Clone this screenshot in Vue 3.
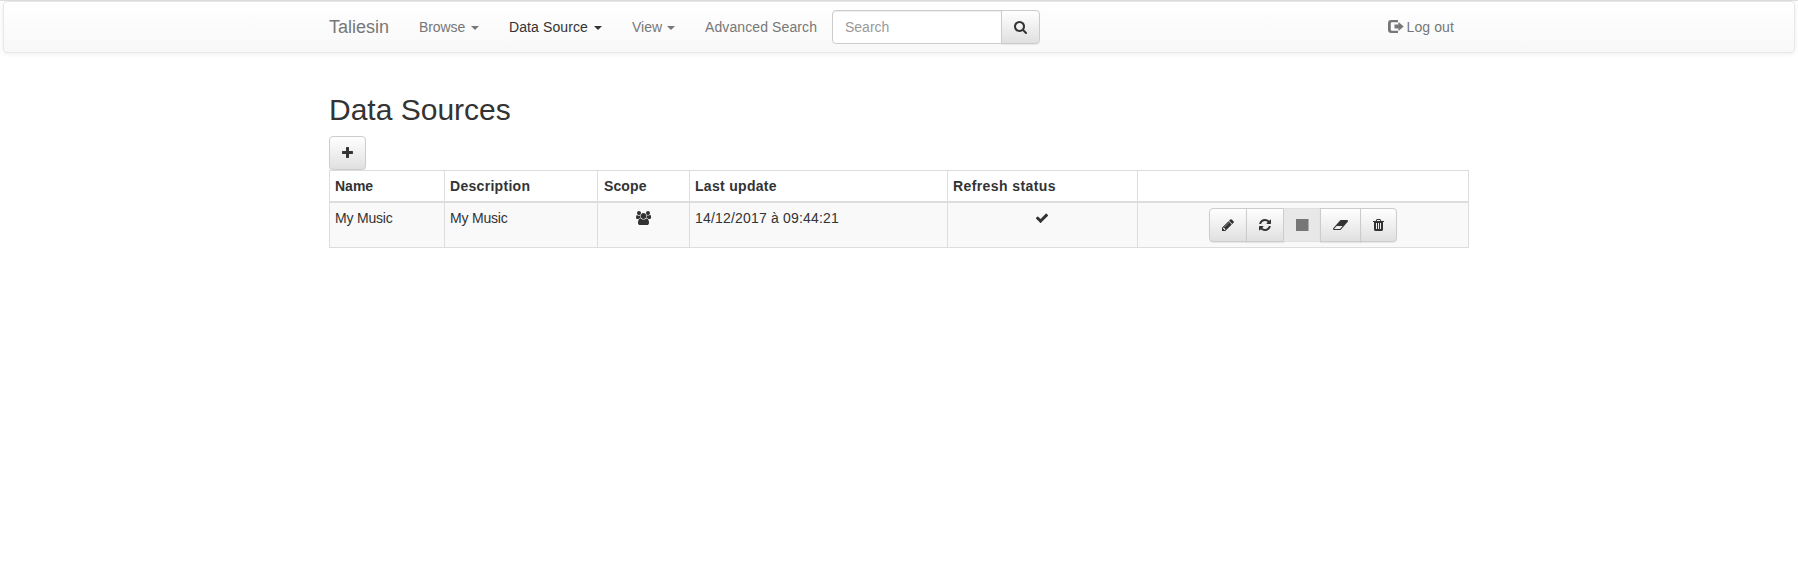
<script setup>
const icons = {
  search: { w: 1664, x: 64, d: 'M1216 832q0-185-131.5-316.5t-316.5-131.5-316.5 131.5-131.5 316.5 131.5 316.5 316.5 131.5 316.5-131.5 131.5-316.5zm512 832q0 52-38 90t-90 38q-54 0-90-38l-343-342q-179 124-399 124-143 0-273.5-55.5t-225-150-150-225-55.5-273.5 55.5-273.5 150-225 225-150 273.5-55.5 273.5 55.5 225 150 150 225 55.5 273.5q0 220-124 399l343 343q37 37 37 90z' },
  plus: { w: 1408, x: 192, d: 'M1600 736v192q0 40-28 68t-68 28h-416v416q0 40-28 68t-68 28h-192q-40 0-68-28t-28-68v-416h-416q-40 0-68-28t-28-68v-192q0-40 28-68t68-28h416v-416q0-40 28-68t68-28h192q40 0 68 28t28 68v416h416q40 0 68 28t28 68z' },
  check: { w: 1792, x: 0, d: 'M1671 566q0 40-28 68l-724 724-136 136q-28 28-68 28t-68-28l-136-136-362-362q-28-28-28-68t28-68l136-136q28-28 68-28t68 28l294 295 656-657q28-28 68-28t68 28l136 136q28 28 28 68z' },
  pencil: { w: 1536, x: 128, d: 'M491 1536l91-91-235-235-91 91v107h128v128h107zm523-928q0-22-22-22-10 0-17 7l-542 542q-7 7-7 17 0 22 22 22 10 0 17-7l542-542q7-7 7-17zm-54-192l416 416-832 832h-416v-416zm683 96q0 53-37 90l-166 166-416-416 166-165q36-38 90-38 53 0 91 38l235 234q37 39 37 91z' },
  refresh: { w: 1536, x: 128, d: 'M1639 1056q0 5-1 7-64 268-268 434.5t-478 166.5q-146 0-282.5-55t-243.5-157l-129 129q-19 19-45 19t-45-19-19-45v-448q0-26 19-45t45-19h448q26 0 45 19t19 45-19 45l-137 137q71 66 161 102t187 36q134 0 250-65t186-179q11-17 53-117 8-23 30-23h192q13 0 22.5 9.5t9.5 22.5zm25-800v448q0 26-19 45t-45 19h-448q-26 0-45-19t-19-45 19-45l138-138q-148-137-349-137-134 0-250 65t-186 179q-11 17-53 117-8 23-30 23h-199q-13 0-22.5-9.5t-9.5-22.5v-7q65-268 270-434.5t480-166.5q146 0 284 55.5t245 156.5l130-129q19-19 45-19t45 19 19 45z' },
  stop: { w: 1664, x: 64, d: 'M64 128h1600v1536h-1600z' },
  eraser: { w: 1920, x: 64, d: 'M960 1408l336-384h-768l-336 384h768zm1013-1077q15 34 9.5 71.5t-30.5 65.5l-896 1024q-38 44-96 44h-768q-38 0-69.5-20.5t-47.5-54.5q-15-34-9.5-71.5t30.5-65.5l896-1024q38-44 96-44h768q38 0 69.5 20.5t47.5 54.5z' },
  trash: { w: 1408, x: 192, d: 'M704 1376v-704q0-14-9-23t-23-9h-64q-14 0-23 9t-9 23v704q0 14 9 23t23 9h64q14 0 23-9t9-23zm256 0v-704q0-14-9-23t-23-9h-64q-14 0-23 9t-9 23v704q0 14 9 23t23 9h64q14 0 23-9t9-23zm256 0v-704q0-14-9-23t-23-9h-64q-14 0-23 9t-9 23v704q0 14 9 23t23 9h64q14 0 23-9t9-23zm-544-992h448l-48-117q-7-9-17-11h-317q-10 2-17 11zm928 32v64q0 14-9 23t-23 9h-96v948q0 83-47 143.5t-113 60.5h-832q-66 0-113-58.5t-47-141.5v-952h-96q-14 0-23-9t-9-23v-64q0-14 9-23t23-9h309l70-167q15-37 54-63t79-26h320q40 0 79 26t54 63l70 167h309q14 0 23 9t9 23z' },
  users: { w: 1920, x: 64, d: 'M657 896q-162 5-265 128h-134q-82 0-138-40.5t-56-118.5q0-353 124-353 6 0 43.5 21t97.5 42.5 119 21.5q67 0 133-23-5 37-5 66 0 159 93 290zm1071 637q0 120-73 189.5t-194 69.5h-874q-121 0-194-69.5t-73-189.5q0-53 3.5-103.5t14-109 26.5-108.5 43-97.5 62-81 85.5-53.5 111.5-20q10 0 43 21.5t73 48 107 48 135 21.5 135-21.5 107-48 73-48 43-21.5q61 0 111.5 20t85.5 53.5 62 81 43 97.5 26.5 108.5 14 109 3.5 103.5zm-1024-1277q0 106-75 181t-181 75-181-75-75-181 75-181 181-75 181 75 75 181zm704 384q0 159-112.5 271.5t-271.5 112.5-271.5-112.5-112.5-271.5 112.5-271.5 271.5-112.5 271.5 112.5 112.5 271.5zm576 225q0 78-56 118.5t-138 40.5h-134q-103-123-265-128 93-131 93-290 0-29-5-66 66 23 133 23 59 0 119-21.5t97.5-42.5 43.5-21q124 0 124 353zm-128-609q0 106-75 181t-181 75-181-75-75-181 75-181 181-75 181 75 75 181z' },
}
const box = (n) => `${icons[n].x} 0 ${icons[n].w} 1792`
const menus = [
  { label: 'Browse', caret: true, cls: 'browse' },
  { label: 'Data Source', caret: true, cls: 'active' },
  { label: 'View', caret: true, cls: 'view' },
  { label: 'Advanced Search', cls: 'advanced' },
]
const actions = ['pencil', 'refresh', 'stop', 'eraser', 'trash']
</script>

<template>
  <div class="page">
    <nav class="navbar">
      <div class="container bar">
        <a class="brand">Taliesin</a>
        <a v-for="m in menus" :key="m.label" class="link" :class="m.cls">{{ m.label }}<i v-if="m.caret" class="caret"></i></a>
        <form class="search" @submit.prevent>
          <input type="text" placeholder="Search" />
          <button class="btn" type="submit">
            <svg class="ic search-ic" :viewBox="box('search')"><path :d="icons.search.d" /></svg>
          </button>
        </form>
        <a class="link logout">
          <svg class="out" width="16" height="13" viewBox="0 0 16 13">
            <path d="M10 0H3.200Q0 0 0 3.200V9.800Q0 13 3.200 13H10V10.800H4Q2.800 10.800 2.800 9.600V3.400Q2.800 2.200 4 2.200H10Z" />
            <path d="M6.500 4.600H10.500V2L15.700 6.500L10.500 11V8.400H6.500Z" />
          </svg>Log out</a>
      </div>
    </nav>
    <main class="container">
      <h2>Data Sources</h2>
      <button class="btn add"><svg class="ic plus" :viewBox="box('plus')"><path :d="icons.plus.d" /></svg></button>
      <table>
        <colgroup><col class="c1" /><col class="c2" /><col class="c3" /><col class="c4" /><col class="c5" /><col class="c6" /></colgroup>
        <thead>
          <tr><th>Name</th><th class="wide">Description</th><th class="scope">Scope</th><th class="wide">Last update</th><th class="wider">Refresh status</th><th></th></tr>
        </thead>
        <tbody>
          <tr>
            <td class="name">My Music</td>
            <td class="name">My Music</td>
            <td class="mid"><svg class="ic users" :viewBox="box('users')"><path :d="icons.users.d" /></svg></td>
            <td class="date">14/12/2017 à 09:44:21</td>
            <td class="mid"><svg class="ic check" :viewBox="box('check')"><path :d="icons.check.d" /></svg></td>
            <td>
              <div class="group">
                <button v-for="a in actions" :key="a" class="btn" :class="a" :disabled="a === 'stop'">
                  <svg class="ic" :viewBox="box(a)"><path :d="icons[a].d" /></svg>
                </button>
              </div>
            </td>
          </tr>
        </tbody>
      </table>
    </main>
  </div>
</template>

<style>
body { margin: 0; background: #fff; }
</style>

<style scoped>
* { box-sizing: border-box; }
.page { min-height: 588px; border-top: 1px solid #e0e0e0; font: 14px/20px "Liberation Sans", Arial, sans-serif; color: #333; }
.navbar { height: 52px; margin: 0 3px; border: 1px solid #e7e7e7; border-radius: 4px; background: linear-gradient(#fff, #f8f8f8); box-shadow: inset 0 1px 0 rgba(255,255,255,.15), 0 1px 5px rgba(0,0,0,.075); }
.container { width: 1140px; margin: 0 auto; }
.bar { display: flex; height: 50px; }
.brand { width: 75px; padding: 15px 15px 15px 0; font-size: 18px; color: #777; text-shadow: 0 1px 0 rgba(255,255,255,.25); }
.link { display: flex; padding: 15px; color: #777; white-space: nowrap; text-shadow: 0 1px 0 rgba(255,255,255,.25); }
.browse { width: 90px; letter-spacing: -.1px; }
.link.active { width: 123px; color: #333; letter-spacing: .1px; }
.view { width: 73px; }
.advanced { width: 142px; letter-spacing: .1px; }
.caret { width: 0; height: 0; margin: 9px 0 0 auto; border-top: 4px solid; border-left: 4px solid transparent; border-right: 4px solid transparent; }
.search { display: flex; padding-top: 8px; }
.search input { width: 170px; height: 34px; margin: 0; padding: 6px 12px; border: 1px solid #ccc; border-radius: 4px 0 0 4px; font: inherit; background: #fff; box-shadow: inset 0 1px 1px rgba(0,0,0,.075); outline: 0; }
.search input::placeholder { color: #999; opacity: 1; }
.search .btn { width: 39px; margin-left: -1px; border-radius: 0 4px 4px 0; }
.logout { margin-left: auto; letter-spacing: .1px; }
.out { margin: 3px 3px 0 0; fill: #777; }
.btn { display: flex; align-items: center; justify-content: center; width: 37px; height: 34px; margin: 0; padding: 0; border: 1px solid #ccc; border-radius: 4px; background: linear-gradient(#fff, #e0e0e0); box-shadow: inset 0 1px 0 rgba(255,255,255,.15), 0 1px 1px rgba(0,0,0,.075); }
.ic { display: block; height: 14px; fill: #333; overflow: visible; }
.search-ic { width: 13px; }
h2 { margin: 40px 0 10px; font-size: 30px; line-height: 33px; font-weight: 400; }
.plus { width: 11px; }
table { width: 1140px; table-layout: fixed; border-collapse: separate; border-spacing: 0; border: solid #ddd; border-width: 1px 0 0 1px; }
.c1 { width: 115px; } .c2 { width: 153px; } .c3 { width: 92px; } .c4 { width: 258px; } .c5 { width: 190px; } .c6 { width: 331px; }
th, td { padding: 5px; border-right: 1px solid #ddd; text-align: left; vertical-align: top; }
th { height: 32px; border-bottom: 2px solid #ddd; font-weight: 700; }
td { height: 45px; border-bottom: 1px solid #ddd; background: #f9f9f9; }
.wide { letter-spacing: .3px; }
.scope { padding-left: 6px; letter-spacing: .1px; }
.wider { letter-spacing: .4px; }
.name { letter-spacing: -.2px; }
.date { letter-spacing: .18px; }
.mid .ic { margin: 3px auto 0; }
.users { width: 15px; }
.mid .check { width: 14px; margin-left: 82px; }
.group { display: flex; justify-content: center; }
.group .btn { border-radius: 0; }
.group .btn + .btn { width: 38px; margin-left: -1px; }
.group .pencil { width: 38px; border-radius: 4px 0 0 4px; }
.group .btn.eraser { width: 41px; }
.group .btn.trash { width: 37px; border-radius: 0 4px 4px 0; }
.group .stop { border-color: #e0e0e0; border-left-color: #ccc; background: #e8e8e8; box-shadow: none; }
.group .stop .ic { width: 13px; fill: #777; }
.group .eraser { z-index: 1; }
</style>
